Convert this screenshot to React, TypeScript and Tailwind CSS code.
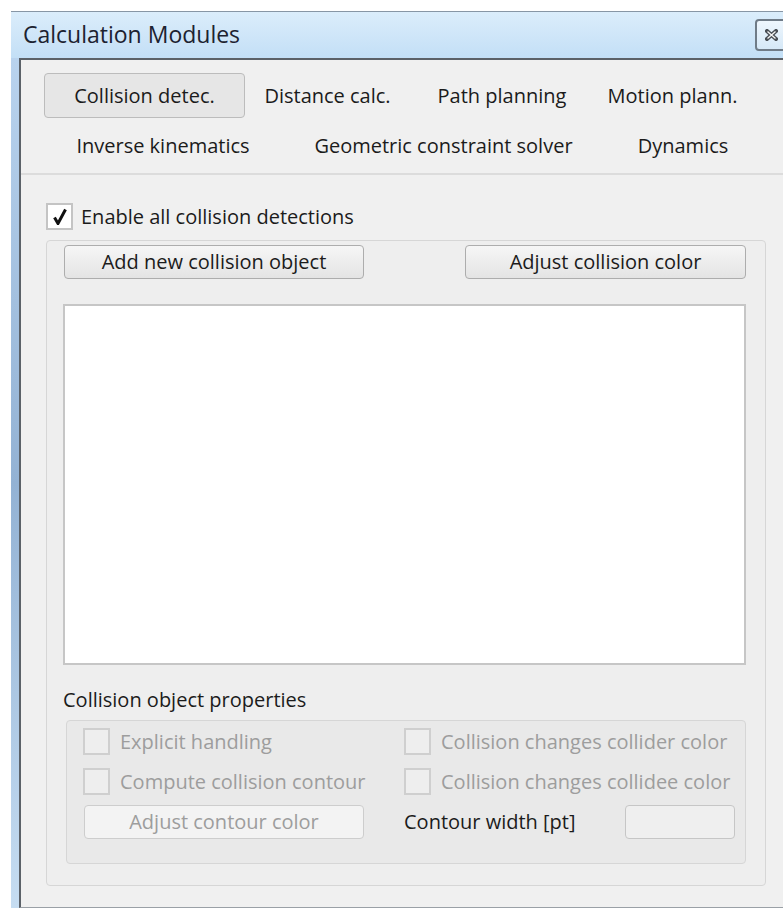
import { ReactNode } from 'react'

type TabDef = { label: string; w: string; active?: boolean }

const rowOne: TabDef[] = [
  { label: 'Collision detec.', w: 'w-[201px]', active: true },
  { label: 'Distance calc.', w: 'w-[165px]' },
  { label: 'Path planning', w: 'w-[184px]' },
  { label: 'Motion plann.', w: 'w-[157px]' },
]

const rowTwo: TabDef[] = [
  { label: 'Inverse kinematics', w: 'w-[238px]' },
  { label: 'Geometric constraint solver', w: 'w-[323px]' },
  { label: 'Dynamics', w: 'w-[156px]' },
]

function Tab({ tab }: { tab: TabDef }) {
  return (
    <div
      className={
        'flex h-full items-center justify-center whitespace-nowrap ' +
        tab.w +
        (tab.active ? ' rounded-[4px] border border-[#bcbcbc] bg-[#e6e6e6]' : '')
      }
    >
      {tab.label}
    </div>
  )
}

function CheckBox({ checked, disabled }: { checked?: boolean; disabled?: boolean }) {
  return (
    <div
      className={
        'flex h-[27px] w-[27px] shrink-0 items-center justify-center border-2 ' +
        (disabled ? 'border-[#cfcfcf] bg-[#eeeeee]' : 'border-[#c4c4c4] bg-white')
      }
    >
      {checked && (
        <svg width="14" height="17" viewBox="0 0 14 17">
          <path d="M1.5 9.5 L5 15.5 L12.5 1.5" fill="none" stroke="#111" strokeWidth="3" strokeLinejoin="miter" />
        </svg>
      )}
    </div>
  )
}

function Button({ children, w, disabled }: { children: ReactNode; w: string; disabled?: boolean }) {
  return (
    <div
      className={
        'flex h-[34px] items-center justify-center whitespace-nowrap rounded-[4px] border ' +
        w +
        (disabled
          ? ' border-[#cdcdcd] bg-[#f3f3f3] text-[#9d9d9d]'
          : ' border-[#adadad] bg-gradient-to-b from-[#f6f6f6] to-[#e4e4e4] text-[#1b1b1b]')
      }
    >
      {children}
    </div>
  )
}

function CheckRow({ label }: { label: string }) {
  return (
    <div className="flex h-[27px] items-center gap-[10px] whitespace-nowrap text-[#9d9d9d]">
      <CheckBox disabled />
      <span>{label}</span>
    </div>
  )
}

export default function App() {
  return (
    <div className="h-[908px] w-[783px] overflow-hidden bg-white pl-[11px] pt-[11px] font-['Open_Sans',sans-serif] text-[20px] leading-[1.2] text-[#1b1b1b]">
      <div className="flex h-full flex-col border-t border-[#8796a5]">
        {/* title bar */}
        <div className="flex h-[46px] items-center justify-between bg-gradient-to-b from-[#dbedfb] to-[#c3dff6] pl-[12px]">
          <span className="text-[23px] text-[#1c2230]">Calculation Modules</span>
          <div className="-mr-[6px] flex h-[32px] w-[34px] items-center justify-start rounded-[4px] border-2 border-[#6f7b87] bg-gradient-to-b from-[#eef6fd] to-[#d6e8f7] pl-[8px]">
            <svg width="13" height="12" viewBox="0 0 13 12">
              <path d="M2 2 L11 10 M11 2 L2 10" stroke="#4a4f55" strokeWidth="4" strokeLinecap="square" />
              <path d="M2.5 2.5 L10.5 9.5 M10.5 2.5 L2.5 9.5" stroke="#f4f4f4" strokeWidth="1.3" />
            </svg>
          </div>
        </div>

        <div className="flex flex-1">
          {/* window side frame */}
          <div className="w-[8px] bg-gradient-to-b from-[#b9d3ee] via-[#93b2d4] to-[#c6ddf2]" />

          <div className="flex-1 border-l-2 border-t-2 border-b border-[#5b6168] border-b-[#9aa0a6] bg-[#f0f0f0]">
            {/* tab bar */}
            <div className="pl-[23px] pt-[13px]">
              <div className="flex h-[45px]">
                {rowOne.map((t) => (
                  <Tab key={t.label} tab={t} />
                ))}
              </div>
              <div className="mt-[5px] flex h-[45px]">
                {rowTwo.map((t) => (
                  <Tab key={t.label} tab={t} />
                ))}
              </div>
            </div>
            <div className="mt-[5px] h-[2px] bg-[#dcdcdc]" />

            {/* collision detection page */}
            <div className="pl-[25px]">
              <div className="mt-[28px] flex h-[27px] items-center gap-[8px]">
                <CheckBox checked />
                <span>Enable all collision detections</span>
              </div>

              <div className="mt-[10px] h-[646px] w-[720px] rounded-[4px] border border-[#d6d6d6] bg-[#eeeeee] pl-[16px] pr-[19px] pt-[4px]">
                <div className="flex justify-between pl-[1px]">
                  <Button w="w-[300px]">Add new collision object</Button>
                  <Button w="w-[281px]">Adjust collision color</Button>
                </div>

                <div className="mt-[25px] h-[361px] w-[683px] border-2 border-[#c6c6c6] bg-white" />

                <div className="mt-[23px] flex h-[24px] items-center">Collision object properties</div>

                <div className="ml-[3px] mt-[8px] h-[144px] w-[680px] rounded-[4px] border border-[#d6d6d6] bg-[#e9e9e9] pl-[16px] pt-[7px]">
                  <div className="grid grid-cols-[321px_1fr] gap-y-[13px]">
                    <CheckRow label="Explicit handling" />
                    <CheckRow label="Collision changes collider color" />
                    <CheckRow label="Compute collision contour" />
                    <CheckRow label="Collision changes collidee color" />
                    <div className="-mt-[3px] pl-[1px]">
                      <Button w="w-[280px]" disabled>
                        Adjust contour color
                      </Button>
                    </div>
                    <div className="-mt-[3px] flex h-[34px] items-center justify-between pr-[10px]">
                      <span>Contour width [pt]</span>
                      <div className="h-[34px] w-[110px] rounded-[4px] border border-[#c6c6c6] bg-[#efefef]" />
                    </div>
                  </div>
                </div>
              </div>
            </div>
          </div>
        </div>
      </div>
    </div>
  )
}
